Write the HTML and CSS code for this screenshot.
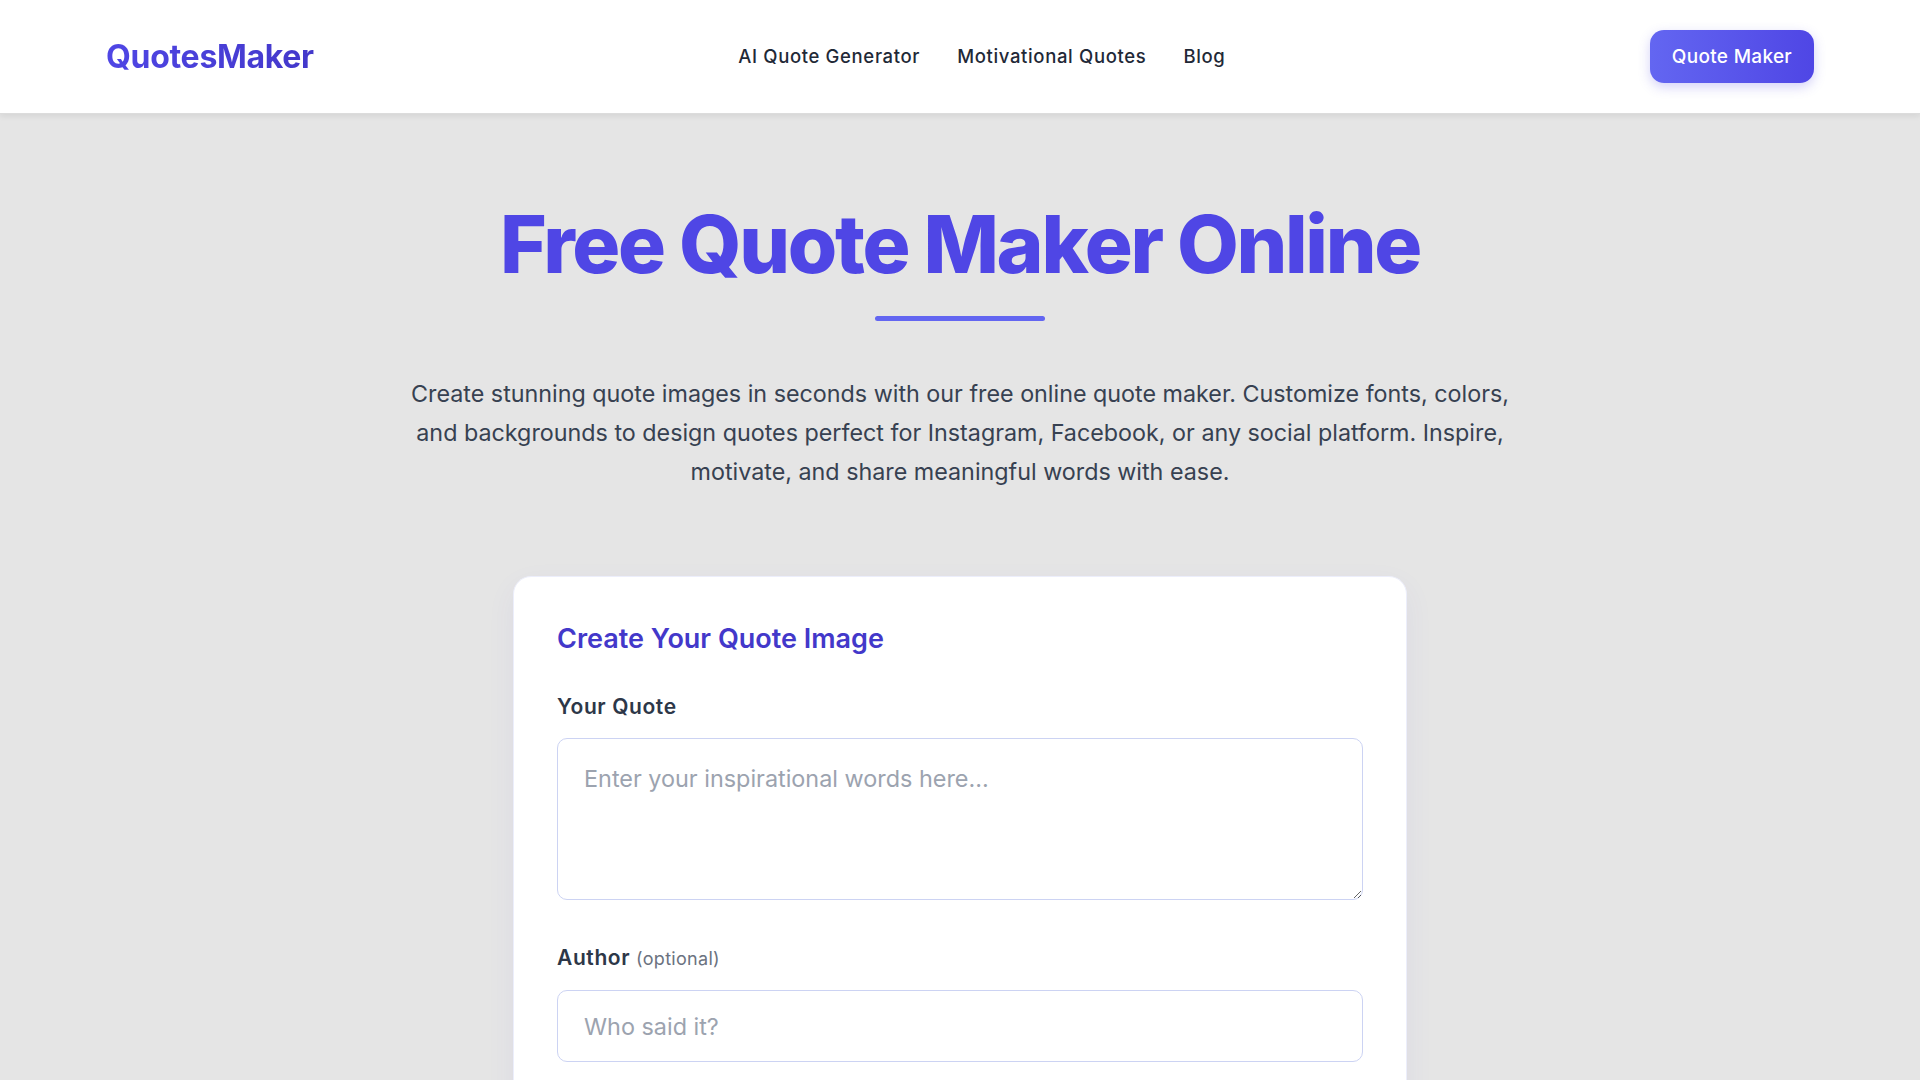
FILE: index.html
```html
<!DOCTYPE html>
<html>
<head>
    <title>Free Quote Maker Online - QuotesMaker</title>
    <meta charset="utf-8">
    <link rel="stylesheet" href="styles.css">
</head>
<body>
    <header class="site-header">
        <div class="header-inner">
            <a href="#" class="logo">QuotesMaker</a>
            <nav class="main-nav">
                <a href="#">AI Quote Generator</a>
                <a href="#">Motivational Quotes</a>
                <a href="#">Blog</a>
            </nav>
            <a href="#" class="btn-cta">Quote Maker</a>
        </div>
    </header>

    <main>
        <section class="hero">
            <h1>Free Quote Maker Online</h1>
            <div class="title-bar"></div>
            <p class="intro">Create stunning quote images in seconds with our free online quote maker. Customize fonts, colors, and backgrounds to design quotes perfect for Instagram, Facebook, or any social platform. Inspire, motivate, and share meaningful words with ease.</p>
        </section>

        <section class="maker-card">
            <h2>Create Your Quote Image</h2>
            <div class="form-group">
                <label for="quote-text">Your Quote</label>
                <textarea id="quote-text" placeholder="Enter your inspirational words here..."></textarea>
            </div>
            <div class="form-group">
                <label for="quote-author">Author <span class="hint">(optional)</span></label>
                <input type="text" id="quote-author" placeholder="Who said it?">
            </div>
        </section>
    </main>
</body>
</html>
```

FILE: styles.css
```css
* {
    box-sizing: border-box;
}

body {
    font-family: Inter, "Noto Sans", sans-serif;
    background-color: #e5e5e5;
    color: #374151;
    margin: 0;
    padding: 0;
}

a {
    text-decoration: none;
}

/* header */
.site-header {
    background-color: #fff;
    box-shadow: 0 2px 6px rgba(0, 0, 0, 0.08);
    border-bottom: 1px solid #dcdcdc;
}

.header-inner {
    height: 113px;
    padding: 0 106px;
    display: flex;
    align-items: center;
    justify-content: space-between;
}

.logo {
    font-size: 32px;
    font-weight: 700;
    letter-spacing: -0.3px;
    background: linear-gradient(90deg, #4f46e5, #4338ca);
    -webkit-background-clip: text;
    background-clip: text;
    color: transparent;
}

.main-nav {
    display: flex;
    gap: 37px;
    padding-bottom: 1px;
}

.main-nav a {
    color: #1f2937;
    font-size: 18.5px;
    font-weight: 500;
    letter-spacing: 0.65px;
}

.btn-cta {
    display: inline-block;
    height: 53px;
    line-height: 53px;
    padding: 0 22px;
    border-radius: 14px;
    background: linear-gradient(90deg, #6366f1, #4f46e5);
    color: #fff;
    font-size: 19px;
    font-weight: 500;
    letter-spacing: 0.3px;
    box-shadow: 0 4px 12px rgba(79, 70, 229, 0.25);
}

/* hero */
.hero {
    text-align: center;
    padding-top: 86px;
}

.hero h1 {
    margin: 0;
    font-size: 80px;
    line-height: 1.1;
    font-weight: 800;
    letter-spacing: -2.3px;
    color: #4f46e5;
}

.title-bar {
    width: 170px;
    height: 5px;
    margin: 28px auto 0;
    border-radius: 3px;
    background-color: #6366f1;
}

.intro {
    max-width: 1110px;
    margin: 53px auto 0;
    font-size: 23.3px;
    line-height: 39px;
    color: #374151;
}

/* form card */
.maker-card {
    width: 894px;
    margin: 85px auto 0;
    padding: 44px 43px 43px;
    background-color: #fff;
    border-radius: 18px;
    border: 1px solid #eceefb;
    box-shadow: 0 10px 30px rgba(79, 70, 229, 0.06);
}

.maker-card h2 {
    margin: 0 0 36px;
    font-size: 27px;
    line-height: 35px;
    font-weight: 600;
    color: #4338ca;
}

.form-group {
    margin-bottom: 43px;
}

.form-group label {
    display: block;
    margin-bottom: 16px;
    font-size: 21px;
    line-height: 30px;
    font-weight: 600;
    letter-spacing: 0.6px;
    color: #2d3748;
}

.form-group .hint {
    font-size: 18px;
    font-weight: 400;
    letter-spacing: 0.3px;
    color: #6b7280;
}

.form-group textarea,
.form-group input {
    display: block;
    width: 100%;
    font-family: Inter, "Noto Sans", sans-serif;
    font-size: 23.4px;
    line-height: 1.5;
    color: #1f2937;
    background-color: #fff;
    border: 1.5px solid #ccd3f3;
    border-radius: 10px;
    outline: none;
}

.form-group textarea {
    height: 162px;
    padding: 22px 26px;
    resize: vertical;
}

.form-group input {
    height: 72px;
    padding: 0 26px;
}

.form-group textarea::placeholder,
.form-group input::placeholder {
    color: #9ca3af;
}
```
